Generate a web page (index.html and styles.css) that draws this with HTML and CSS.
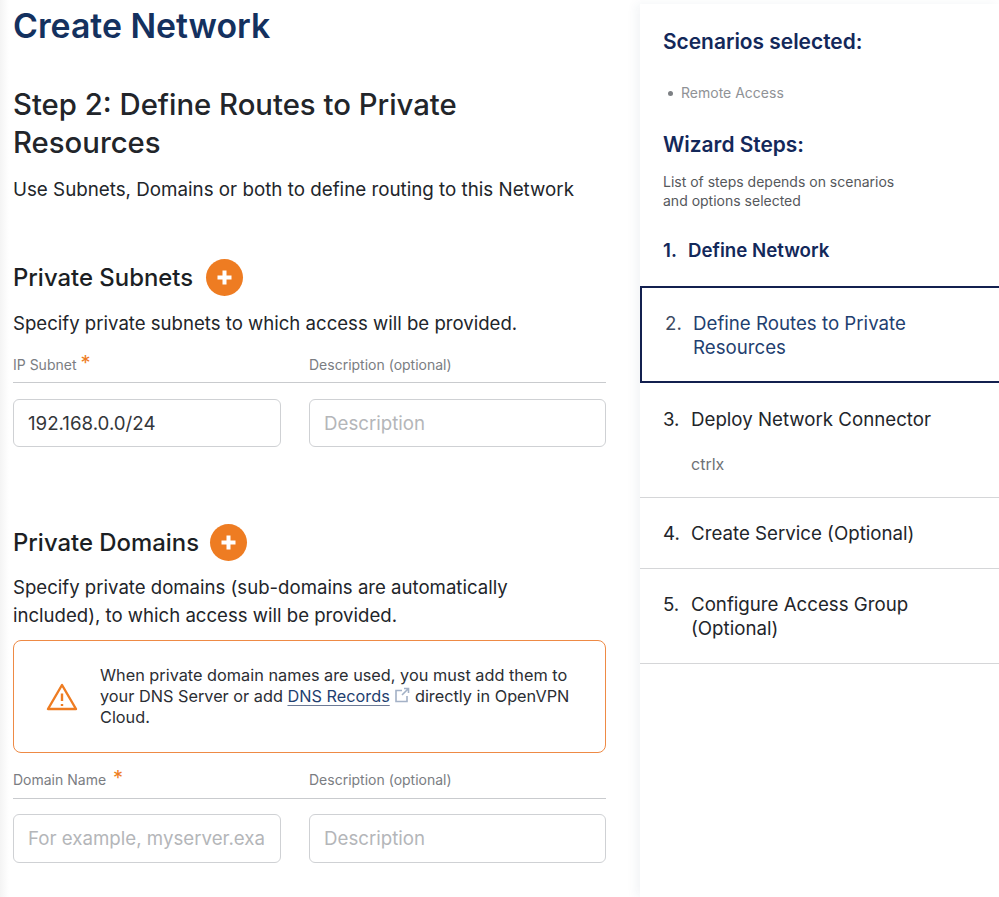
FILE: index.html
```html
<!DOCTYPE html>
<html lang="en">
<head>
<meta charset="utf-8">
<title>Create Network</title>
<link rel="stylesheet" href="styles.css">
</head>
<body>
<div class="page">
  <main class="main">
    <h1 class="title">Create Network</h1>
    <h2 class="step">Step 2: Define Routes to Private Resources</h2>
    <p class="lead">Use Subnets, Domains or both to define routing to this Network</p>

    <section class="subnets">
      <div class="sec-head">
        <h3>Private Subnets</h3>
        <button class="add" aria-label="Add subnet"><svg viewBox="0 0 37 37"><path d="M18.5 11.5v14M11.5 18.5h14"/></svg></button>
      </div>
      <p class="desc">Specify private subnets to which access will be provided.</p>
      <div class="labels">
        <span>IP Subnet <b class="req">*</b></span>
        <span>Description (optional)</span>
      </div>
      <div class="fields">
        <input value="192.168.0.0/24">
        <input placeholder="Description">
      </div>
    </section>

    <section class="domains">
      <div class="sec-head">
        <h3>Private Domains</h3>
        <button class="add" aria-label="Add domain"><svg viewBox="0 0 37 37"><path d="M18.5 11.5v14M11.5 18.5h14"/></svg></button>
      </div>
      <p class="desc">Specify private domains (sub-domains are automatically included), to which access will be provided.</p>
      <div class="alert">
        <svg class="warn" viewBox="0 0 32 28"><path d="M16 2 2 26h28z"/><path d="M16 10.5v7.5M16 21v2"/></svg>
        <p>When private domain names are used, you must add them to your DNS Server or add <a href="#">DNS Records</a> <svg class="ext" viewBox="0 0 16 16"><path d="M8 3.5H2v11h11V9M10 1.5h4.5V6M14.5 1.5 8 8"/></svg> directly in OpenVPN Cloud.</p>
      </div>
      <div class="labels labels-b">
        <span>Domain Name <b class="req">*</b></span>
        <span>Description (optional)</span>
      </div>
      <div class="fields fields-b">
        <input placeholder="For example, myserver.example.com">
        <input placeholder="Description">
      </div>
    </section>
  </main>

  <aside class="side">
    <div class="side-top">
      <h4>Scenarios selected:</h4>
      <ul class="scen"><li>Remote Access</li></ul>
      <h4>Wizard Steps:</h4>
      <p class="note">List of steps depends on scenarios<br>and options selected</p>
    </div>
    <ol class="steps">
      <li class="s1"><span class="n">1.</span><span>Define Network</span></li>
      <li class="s2"><span class="n">2.</span><span>Define Routes to Private Resources</span></li>
      <li class="s3"><span class="n">3.</span><div><span>Deploy Network Connector</span><small>ctrlx</small></div></li>
      <li class="s4"><span class="n">4.</span><span>Create Service (Optional)</span></li>
      <li class="s5"><span class="n">5.</span><span>Configure Access Group (Optional)</span></li>
    </ol>
  </aside>
</div>
</body>
</html>
```
FILE: styles.css
```css
* { box-sizing: border-box; }
html, body { margin: 0; height: 100%; }
body {
  font-family: Inter, "Liberation Sans", sans-serif;
  color: #22252a;
  background: #fff;
  overflow: hidden;
}
.page {
  display: grid;
  grid-template-columns: 640px 359px;
  height: 897px;
  background: linear-gradient(90deg, #f4f4f4 0, #fff 9px);
}
.main { padding: 0 34px 0 13px; }
h1, h2, h3, h4, p, ul, ol { margin: 0; padding: 0; }
.title {
  font-size: 33.8px;
  line-height: 51px;
  font-weight: 600;
  color: #14315f;
}
.step {
  margin-top: 35px;
  font-size: 29.3px;
  line-height: 38px;
  font-weight: 500;
  color: #22252a;
  max-width: 520px;
}
.lead {
  margin-top: 14px;
  font-size: 18.77px;
  line-height: 28px;
}
.subnets { margin-top: 55px; }
.sec-head {
  display: flex;
  align-items: center;
  gap: 12.5px;
  height: 37px;
}
.domains .sec-head { gap: 11px; }
.sec-head h3 {
  font-size: 23.9px;
  line-height: 30px;
  font-weight: 500;
  color: #1c1f24;
}
.add {
  width: 37px;
  height: 37px;
  padding: 0;
  border: 0;
  border-radius: 50%;
  background: #ee7c22;
}
.add svg { display: block; width: 37px; height: 37px; }
.add path { fill: none; stroke: #fff; stroke-width: 4; }
.desc {
  margin-top: 13px;
  font-size: 18.6px;
  line-height: 28px;
  max-width: 560px;
}
.labels {
  display: grid;
  grid-template-columns: 268px 297px;
  gap: 28px;
  height: 47px;
  margin-top: -1px;
  padding-top: 18px;
  font-size: 14px;
  line-height: 20px;
  color: #7a7d82;
  border-bottom: 1px solid #c9cbce;
}
.labels span { display: block; padding-top: 1px; }
.req {
  font-weight: 400;
  font-size: 20px;
  line-height: 14px;
  color: #ee7c22;
  vertical-align: 0;
}
.fields {
  display: grid;
  grid-template-columns: 268px 297px;
  gap: 28px;
  margin-top: 16px;
}
.fields-b { margin-top: 15px; }
.fields input {
  width: 100%;
  height: 48px;
  padding: 0 14px;
  font: 400 18.7px Inter, "Liberation Sans", sans-serif;
  color: #33363a;
  background: #fff;
  border: 1px solid #cfd1d4;
  border-radius: 6px;
  outline: 0;
}
.fields-b input { height: 49px; }
.fields input::placeholder { color: #b4b6b9; opacity: 1; }
.domains { margin-top: 77px; }
.domains .desc { margin-top: 12px; }
.alert {
  display: flex;
  align-items: center;
  margin-top: 11px;
  height: 113px;
  padding: 0 30px 0 32px;
  border: 1px solid #ee8a45;
  border-radius: 8px;
}
.warn { width: 32px; height: 28px; flex: none; margin: 0 22px 0 0; }
.warn path { fill: none; stroke: #ee7c22; stroke-width: 2.4; stroke-linejoin: round; }
.alert p { font-size: 16.3px; line-height: 21px; color: #2b2e33; }
.alert a { color: #1f3f70; text-decoration: underline; text-decoration-color: #6c7a96; text-underline-offset: 3px; }
.ext { width: 16px; height: 16px; vertical-align: -1px; }
.ext path { fill: none; stroke: #a3b1c6; stroke-width: 1.6; }
.labels-b { margin-top: 0; height: 46px; padding-top: 16px; }
.labels-b .req { margin-left: 3px; }
.side {
  margin-top: 4px;
  background: #fff;
  box-shadow: -4px 0 10px rgba(40, 60, 110, .06);
}
.side-top { padding: 25px 23px 0; }
h4 {
  font-size: 20.9px;
  line-height: 26px;
  font-weight: 600;
  color: #13285a;
}
.scen {
  list-style: none;
  margin: 28px 0 29px;
  font-size: 14px;
  line-height: 20px;
  color: #8f9296;
}
.scen li { padding-left: 18px; position: relative; }
.scen li::before {
  content: "";
  position: absolute;
  left: 5px;
  top: 8px;
  width: 5px;
  height: 5px;
  border-radius: 50%;
  background: #7d8084;
}
.note {
  margin-top: 14px;
  font-size: 14px;
  line-height: 19px;
  color: #55585c;
}
.steps { list-style: none; margin-top: 17px; font-size: 18.7px; line-height: 24px; }
.steps li { display: flex; border-bottom: 1px solid #d5d6d8; }
.steps .n { flex: none; width: 28px; }
.steps small { display: block; margin-top: 20px; font-size: 16px; line-height: 24px; color: #6f7276; }
.s1 {
  height: 59px;
  padding: 12px 23px 0;
  font-weight: 600;
  color: #13285a;
  border-bottom: 0 !important;
}
.s1 .n { width: 25px; }
.s2 {
  height: 97px;
  padding: 24px 40px 0 23px;
  color: #1f3f70;
  border: 2px solid #13204f !important;
  border-right: 0 !important;
}
.s2 .n { color: #3d4a62; }
.s3 { height: 115px; padding: 25px 23px 0; }
.s4 { height: 71px; padding: 24px 23px 0; }
.s5 { height: 95px; padding: 24px 40px 0 23px; }
```
